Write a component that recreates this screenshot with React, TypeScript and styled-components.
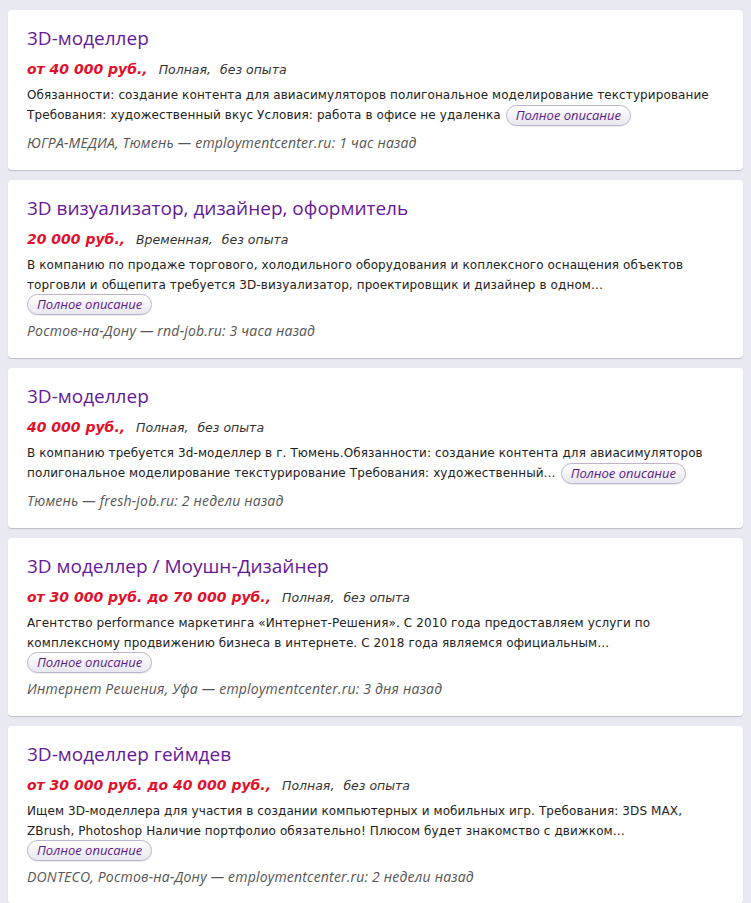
import React from 'react';
import styled, { createGlobalStyle } from 'styled-components';

const GlobalStyle = createGlobalStyle`
  html, body {
    margin: 0;
    padding: 0;
    background: #e8e9f1;
  }
  body {
    font-family: 'Open Sans', 'DejaVu Sans', sans-serif;
    color: #222;
  }
`;

const List = styled.div`
  display: flex;
  flex-direction: column;
  gap: 10px;
  padding: 0 8px 10px;
`;

const PrevTail = styled.div`
  height: 0;
  box-shadow: 0 1px 1px rgba(0, 0, 0, 0.18);
`;

const Card = styled.article`
  background: #fff;
  border-radius: 4px;
  box-shadow: 0 1px 1px rgba(0, 0, 0, 0.18);
  padding: 16px 19px 17px;
`;

const Title = styled.a`
  display: block;
  font-size: 19px;
  line-height: 24px;
  color: #66189a;
  text-decoration: none;
  margin-bottom: 9px;
`;

const Meta = styled.div`
  font-family: 'DejaVu Sans', Verdana, sans-serif;
  font-size: 12.5px;
  line-height: 20px;
  height: 20px;
  font-style: italic;
  color: #333;
  display: flex;
  align-items: baseline;
  gap: 9px;
`;

const Salary = styled.span`
  color: #e3102a;
  font-weight: 700;
  font-size: 14px;
  line-height: 20px;
  margin-right: 2px;
`;

const Desc = styled.p`
  margin: 6px 0 8px;
  font-family: 'DejaVu Sans', Verdana, sans-serif;
  font-size: 12px;
  line-height: 20px;
  letter-spacing: 0.1px;
  color: #222;
`;

const MoreButton = styled.button<{ $block?: boolean }>`
  display: ${p => (p.$block ? 'block' : 'inline-block')};
  height: 21px;
  padding: 0 9px;
  margin: ${p => (p.$block ? '-1px 0 -2px' : '-3px 0 -3px 1px')};
  border: 1px solid #bdb3cc;
  border-radius: 11px;
  background: linear-gradient(#ffffff, #e9e7ef);
  color: #5b1a8c;
  font-family: 'Open Sans', sans-serif;
  font-style: italic;
  font-size: 13px;
  line-height: 19px;
  vertical-align: middle;
  cursor: pointer;
  box-shadow: 0 1px 1px rgba(0, 0, 0, 0.08);
`;

const Source = styled.div`
  font-size: 14px;
  line-height: 20px;
  letter-spacing: 0.2px;
  font-style: italic;
  color: #555;
`;

type Job = {
  title: string;
  salary: string;
  type: string;
  exp: string;
  text: string;
  blockBtn?: boolean;
  source: string;
};

const jobs: Job[] = [
  {
    title: '3D-моделлер',
    salary: 'от 40 000 руб.,',
    type: 'Полная,',
    exp: 'без опыта',
    text: 'Обязанности: создание контента для авиасимуляторов полигональное моделирование текстурирование Требования: художественный вкус Условия: работа в офисе не удаленка',
    source: 'ЮГРА-МЕДИА, Тюмень — employmentcenter.ru: 1 час назад',
  },
  {
    title: '3D визуализатор, дизайнер, оформитель',
    salary: '20 000 руб.,',
    type: 'Временная,',
    exp: 'без опыта',
    text: 'В компанию по продаже торгового, холодильного оборудования и коплексного оснащения объектов торговли и общепита требуется 3D-визуализатор, проектировщик и дизайнер в одном…',
    blockBtn: true,
    source: 'Ростов-на-Дону — rnd-job.ru: 3 часа назад',
  },
  {
    title: '3D-моделлер',
    salary: '40 000 руб.,',
    type: 'Полная,',
    exp: 'без опыта',
    text: 'В компанию требуется 3d-моделлер в г. Тюмень.Обязанности: создание контента для авиасимуляторов полигональное моделирование текстурирование Требования: художественный…',
    source: 'Тюмень — fresh-job.ru: 2 недели назад',
  },
  {
    title: '3D моделлер / Моушн-Дизайнер',
    salary: 'от 30 000 руб. до 70 000 руб.,',
    type: 'Полная,',
    exp: 'без опыта',
    text: 'Агентство performance маркетинга «Интернет-Решения». С 2010 года предоставляем услуги по комплексному продвижению бизнеса в интернете. С 2018 года являемся официальным…',
    blockBtn: true,
    source: 'Интернет Решения, Уфа — employmentcenter.ru: 3 дня назад',
  },
  {
    title: '3D-моделлер геймдев',
    salary: 'от 30 000 руб. до 40 000 руб.,',
    type: 'Полная,',
    exp: 'без опыта',
    text: 'Ищем 3D-моделлера для участия в создании компьютерных и мобильных игр. Требования: 3DS MAX, ZBrush, Photoshop Наличие портфолио обязательно! Плюсом будет знакомство с движком…',
    blockBtn: true,
    source: 'DONTECO, Ростов-на-Дону — employmentcenter.ru: 2 недели назад',
  },
];

const App: React.FC = () => (
  <>
    <GlobalStyle />
    <List>
      <PrevTail />
      {jobs.map((job, i) => (
        <Card key={i}>
          <Title href="#">{job.title}</Title>
          <Meta>
            <Salary>{job.salary}</Salary>
            <span>{job.type}</span>
            <span>{job.exp}</span>
          </Meta>
          <Desc>
            {job.text}
            {job.blockBtn ? null : ' '}
            <MoreButton $block={job.blockBtn}>Полное описание</MoreButton>
          </Desc>
          <Source>{job.source}</Source>
        </Card>
      ))}
    </List>
  </>
);

export default App;
